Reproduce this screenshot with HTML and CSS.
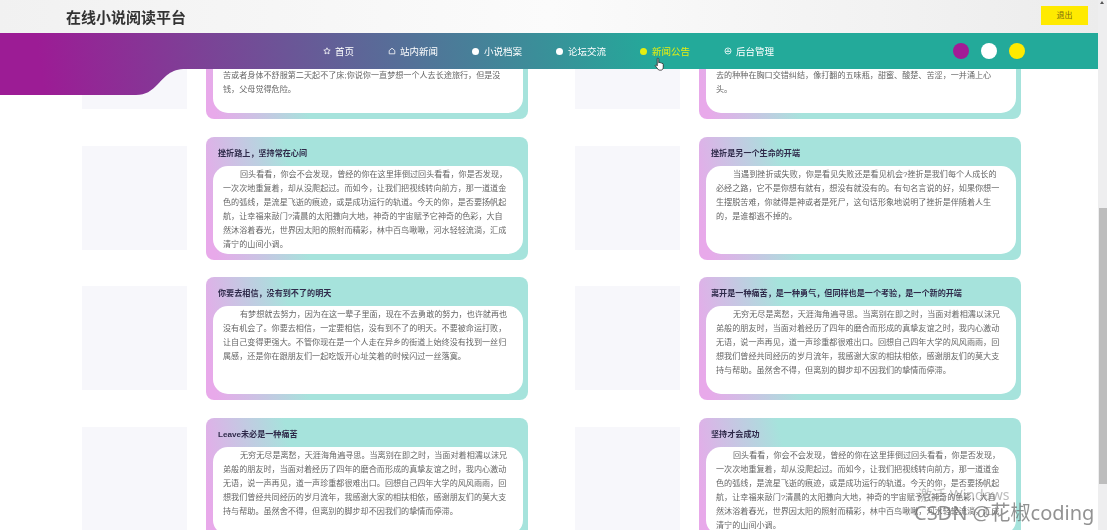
FILE: index.html
```html
<!DOCTYPE html>
<html lang="zh">
<head>
  <meta charset="UTF-8" />
  <meta name="viewport" content="width=device-width, initial-scale=1.0"/>
  <title>在线小说阅读平台</title>
  <link rel="stylesheet" href="styles.css">
</head>
<body>
  <header class="site-head">
    <div class="top-bar">
      <h1>在线小说阅读平台</h1>
      <a class="logout">退出</a>
    </div>
    <nav class="main-nav">
      <a class="nav-item">
        <svg viewBox="0 0 10 10"><path d="M5 1l1.2 2.6 2.8.3-2.1 1.9.6 2.8L5 7.2 2.500 8.600l.6-2.800L1 3.900l2.800-.3z" fill="none" stroke="#fff" stroke-width="1"/></svg>
        首页
      </a>
      <a class="nav-item">
        <svg viewBox="0 0 10 10"><path d="M1.500 8.500V4.500L5 1.500l3.500 3v4z" fill="none" stroke="#fff" stroke-width="1"/></svg>
        站内新闻
      </a>
      <a class="nav-item"><i class="dot"></i>小说档案</a>
      <a class="nav-item"><i class="dot"></i>论坛交流</a>
      <a class="nav-item active"><i class="dot"></i>新闻公告</a>
      <a class="nav-item">
        <svg viewBox="0 0 10 10"><circle cx="5" cy="5" r="3.800" fill="none" stroke="#fff" stroke-width="1"/><path d="M2 5.500h6M5 2.500v3" stroke="#fff" stroke-width="1"/></svg>
        后台管理
      </a>
      <div class="swatches">
        <span class="swatch purple"></span>
        <span class="swatch white"></span>
        <span class="swatch yellow"></span>
      </div>
    </nav>
  </header>

  <main class="news-list">
    <article class="news-item">
      <div class="thumb"></div>
      <div class="card">
        <h3>你说你想要变得更好</h3>
        <p>你说你想要变得更好，却总是停留在原地，每天都告诉自己明天再开始。你说你羡慕别人的优秀，可从来没有想过他们付出了多少努力。你说你有很多的目标，却不知道自己应该具备哪些素质;你说你计划晨跑，但总是因为学习、工作辛苦或者身体不舒服第二天起不了床;你说你一直梦想一个人去长途旅行，但是没钱，父母觉得危险。</p>
      </div>
    </article>
    <article class="news-item">
      <div class="thumb"></div>
      <div class="card">
        <h3>往事涌上心头</h3>
        <p>夜深人静的时候，独自坐在窗前，看着窗外的灯火一盏一盏熄灭，那些曾经以为早已忘记的人和事，总会在不经意之间浮现在眼前，让人久久不能平静，思绪也随着夜色慢慢飘向了远方，而那些埋藏在心底的记忆，悄然从幽暗涌上。过去的种种在胸口交错纠结，像打翻的五味瓶，甜蜜、酸楚、苦涩，一并涌上心头。</p>
      </div>
    </article>

    <article class="news-item">
      <div class="thumb"></div>
      <div class="card">
        <h3>挫折路上，坚持常在心间</h3>
        <p>回头看看，你会不会发现，曾经的你在这里摔倒过回头看看，你是否发现，一次次地重复着，却从没爬起过。而如今，让我们把视线转向前方，那一道道金色的弧线，是流星飞逝的痕迹，或是成功运行的轨道。今天的你，是否要扬帆起航，让幸福来敲门?清晨的太阳撒向大地，神奇的宇宙赋予它神奇的色彩，大自然沐浴着春光，世界因太阳的照射而精彩，林中百鸟啾啾，河水轻轻流淌，汇成清宁的山间小调。</p>
      </div>
    </article>
    <article class="news-item">
      <div class="thumb"></div>
      <div class="card">
        <h3>挫折是另一个生命的开端</h3>
        <p>当遇到挫折或失败，你是看见失败还是看见机会?挫折是我们每个人成长的必经之路，它不是你想有就有，想没有就没有的。有句名言说的好，如果你想一生摆脱苦难，你就得是神或者是死尸，这句话形象地说明了挫折是伴随着人生的，是谁都逃不掉的。</p>
      </div>
    </article>

    <article class="news-item">
      <div class="thumb"></div>
      <div class="card">
        <h3>你要去相信，没有到不了的明天</h3>
        <p>有梦想就去努力，因为在这一辈子里面，现在不去勇敢的努力，也许就再也没有机会了。你要去相信，一定要相信，没有到不了的明天。不要被命运打败，让自己变得更强大。不管你现在是一个人走在异乡的街道上始终没有找到一丝归属感，还是你在跟朋友们一起吃饭开心址笑着的时候闪过一丝落寞。</p>
      </div>
    </article>
    <article class="news-item">
      <div class="thumb"></div>
      <div class="card">
        <h3>离开是一种痛苦，是一种勇气，但同样也是一个考验，是一个新的开端</h3>
        <p>无穷无尽是离愁，天涯海角遍寻思。当离别在即之时，当面对着相濡以沫兄弟般的朋友时，当面对着经历了四年的磨合而形成的真挚友谊之时，我内心激动无语，说一声再见，道一声珍重都很难出口。回想自己四年大学的风风雨雨，回想我们曾经共同经历的岁月流年，我感谢大家的相扶相依，感谢朋友们的莫大支持与帮助。虽然舍不得，但离别的脚步却不因我们的挚情而停滞。</p>
      </div>
    </article>

    <article class="news-item">
      <div class="thumb"></div>
      <div class="card">
        <h3>Leave未必是一种痛苦</h3>
        <p>无穷无尽是离愁，天涯海角遍寻思。当离别在即之时，当面对着相濡以沫兄弟般的朋友时，当面对着经历了四年的磨合而形成的真挚友谊之时，我内心激动无语，说一声再见，道一声珍重都很难出口。回想自己四年大学的风风雨雨，回想我们曾经共同经历的岁月流年，我感谢大家的相扶相依，感谢朋友们的莫大支持与帮助。虽然舍不得，但离别的脚步却不因我们的挚情而停滞。</p>
      </div>
    </article>
    <article class="news-item">
      <div class="thumb"></div>
      <div class="card">
        <h3>坚持才会成功</h3>
        <p>回头看看，你会不会发现，曾经的你在这里摔倒过回头看看，你是否发现，一次次地重复着，却从没爬起过。而如今，让我们把视线转向前方，那一道道金色的弧线，是流星飞逝的痕迹，或是成功运行的轨道。今天的你，是否要扬帆起航，让幸福来敲门?清晨的太阳撒向大地，神奇的宇宙赋予它神奇的色彩，大自然沐浴着春光，世界因太阳的照射而精彩，林中百鸟啾啾，河水轻轻流淌，汇成清宁的山间小调。</p>
      </div>
    </article>
  </main>

  <aside class="scroll-track">
    <span class="scroll-arrow"></span>
    <span class="scroll-thumb"></span>
  </aside>

  <!-- 鼠标手型 -->
  <svg class="hand-cursor" viewBox="0 0 12 16">
    <path d="M3.500 1.500c.8-.7 1.700-.2 1.700.7v4l.6-.4c.7-.2 1.200 0 1.400.5.700-.3 1.200-.1 1.400.5.800-.2 1.500.2 1.500 1v3.200c0 1.800-1 3.200-2.800 3.200H6.200c-1 0-1.600-.5-2.100-1.300L1.500 9.500c-.4-.8.500-1.500 1.200-.9l.8.800z" fill="#fff" stroke="#222" stroke-width=".9"/>
  </svg>

  <div class="watermark">
    <span class="wm-win">激活 Windows</span>
    <span class="wm-csdn">CSDN @花椒coding</span>
  </div>
</body>
</html>
```

FILE: styles.css
```css
body {
  margin: 0;
  height: 530px;
  overflow: hidden;
  background: #fff;
  font-family: "Liberation Sans", "Noto Sans CJK SC", sans-serif;
}

/* 顶部 */
.site-head {
  position: fixed;
  top: 0;
  left: 0;
  width: 1099px;
  z-index: 5;
}
.top-bar {
  height: 33px;
  display: flex;
  align-items: center;
  justify-content: space-between;
  padding: 0 11px 0 66px;
  background: linear-gradient(to right, #f1f1f1, #fbfbfb 50%, #ececec);
}
.top-bar h1 {
  margin: 0;
  font-size: 15px;
  font-weight: bold;
  color: #333;
  filter: blur(.3px);
}
.logout {
  width: 47px;
  height: 19px;
  line-height: 19px;
  margin-top: -3px;
  text-align: center;
  font-size: 8px;
  color: #7a6a10;
  background: #ffea00;
}
.main-nav {
  height: 62px;
  box-sizing: border-box;
  padding: 0 74px 26px 323px;
  display: flex;
  align-items: center;
  gap: 34px;
  background: linear-gradient(82deg, #9c1c95 4%, #23aa9a 60%);
  clip-path: path("M0 0H1099V36H186C170 36 165 44 158 51C151 58 146 62 136 62H0Z");
}
.nav-item {
  display: flex;
  align-items: center;
  gap: 4px;
  font-size: 9.500px;
  color: #fff;
  filter: blur(.3px);
}
.nav-item svg {
  width: 8px;
  height: 8px;
}
.nav-item .dot {
  width: 7px;
  height: 7px;
  margin-right: 1px;
  border-radius: 50%;
  background: #fff;
}
.nav-item.active {
  color: #e6ee10;
}
.nav-item.active .dot {
  background: #e6ee10;
}
.swatches {
  display: flex;
  gap: 12px;
  margin-left: auto;
}
.swatch {
  width: 16px;
  height: 16px;
  border-radius: 50%;
}
.purple { background: #a21b96; }
.white { background: #fff; }
.yellow { background: #ffea00; }

/* 列表 */
.news-list {
  display: grid;
  grid-template-columns: 446px 446px;
  column-gap: 47px;
  row-gap: 17.500px;
  margin-top: -4px;
  padding-left: 82px;
}
.news-item {
  display: flex;
  align-items: flex-start;
  gap: 19px;
}
.thumb {
  flex: none;
  width: 105px;
  height: 104px;
  margin-top: 9px;
  background: #f7f7fb;
}
.card {
  flex: 1;
  height: 123px;
  box-sizing: border-box;
  padding: 11px 5px 6px 7px;
  display: flex;
  flex-direction: column;
  border-radius: 8px;
  background: linear-gradient(78deg, #e8a9ea 3%, #a6e3dc 30%);
}
.card h3 {
  margin: 0 0 0 5px;
  height: 18px;
  line-height: 12px;
  font-size: 8.100px;
  font-weight: bold;
  color: #2f2a4a;
  filter: blur(.3px);
}
.card p {
  flex: 1;
  margin: 0;
  padding: 2px 14px 0 10px;
  border-radius: 15px;
  background: #fff;
  font-size: 8.100px;
  line-height: 14px;
  text-indent: 17px;
  color: #666;
  filter: blur(.3px);
}

/* 滚动条 */
.scroll-track {
  position: fixed;
  top: 0;
  right: 0;
  width: 9px;
  height: 530px;
  background: #eeeeef;
  z-index: 6;
}
.scroll-arrow {
  position: absolute;
  top: 1px;
  left: 2px;
  border: 2.500px solid transparent;
  border-top: 0;
  border-bottom: 3px solid #555;
}
.scroll-thumb {
  position: absolute;
  top: 208px;
  left: 1px;
  width: 8px;
  height: 276px;
  background: #bdbdbd;
}

.hand-cursor {
  position: fixed;
  left: 654px;
  top: 57px;
  width: 11px;
  height: 15px;
  z-index: 7;
}

/* 水印 */
.watermark {
  position: fixed;
  left: 914px;
  top: 486px;
  z-index: 8;
  display: flex;
  flex-direction: column;
  font-family: "Noto Sans", "Noto Sans CJK SC", sans-serif;
  white-space: nowrap;
}
.wm-win {
  margin-left: 4px;
  font-size: 14px;
  line-height: 18px;
  color: rgba(120, 120, 120, .5);
}
.wm-csdn {
  margin-top: -3px;
  font-size: 20px;
  line-height: 24px;
  color: rgba(110, 110, 110, .75);
  filter: blur(.3px);
}
```
